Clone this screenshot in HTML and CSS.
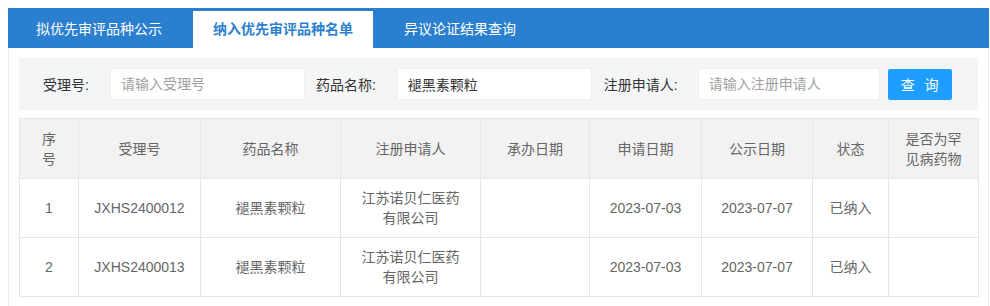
FILE: index.html
```html
<!DOCTYPE html>
<html lang="zh-CN">
<head>
<meta charset="utf-8">
<title>纳入优先审评品种名单</title>
<link rel="stylesheet" href="styles.css">
</head>
<body>
<div class="wrap">
  <div class="tabs">
    <div class="tab tab-first">拟优先审评品种公示</div>
    <div class="tab active">纳入优先审评品种名单</div>
    <div class="tab">异议论证结果查询</div>
  </div>
  <div class="content">
    <div class="search">
      <label class="lbl lbl1">受理号:</label>
      <input class="inp inp1" type="text" placeholder="请输入受理号">
      <label class="lbl lbl2">药品名称:</label>
      <input class="inp inp2" type="text" value="褪黑素颗粒">
      <label class="lbl lbl3">注册申请人:</label>
      <input class="inp inp3" type="text" placeholder="请输入注册申请人">
      <button class="btn" type="button">查 询</button>
    </div>
    <table class="grid">
      <colgroup>
        <col class="c1"><col class="c2"><col class="c3"><col class="c4"><col class="c5"><col class="c6"><col class="c7"><col class="c8"><col class="c9">
      </colgroup>
      <thead>
        <tr>
          <th>序<br>号</th>
          <th>受理号</th>
          <th>药品名称</th>
          <th>注册申请人</th>
          <th>承办日期</th>
          <th>申请日期</th>
          <th>公示日期</th>
          <th>状态</th>
          <th>是否为罕<br>见病药物</th>
        </tr>
      </thead>
      <tbody>
        <tr>
          <td>1</td>
          <td>JXHS2400012</td>
          <td>褪黑素颗粒</td>
          <td>江苏诺贝仁医药<br>有限公司</td>
          <td></td>
          <td>2023-07-03</td>
          <td>2023-07-07</td>
          <td>已纳入</td>
          <td></td>
        </tr>
        <tr>
          <td>2</td>
          <td>JXHS2400013</td>
          <td>褪黑素颗粒</td>
          <td>江苏诺贝仁医药<br>有限公司</td>
          <td></td>
          <td>2023-07-03</td>
          <td>2023-07-07</td>
          <td>已纳入</td>
          <td></td>
        </tr>
      </tbody>
    </table>
  </div>
</div>
</body>
</html>
```

FILE: styles.css
```css
* { box-sizing: border-box; }
html, body { margin: 0; padding: 0; background: #fff; }
body {
  font-family: "Liberation Sans", "Noto Sans CJK SC", sans-serif;
  font-size: 14px;
  color: #333;
}
.wrap {
  margin: 8px 0 0 8px;
  width: 981px;
}
.tabs {
  display: flex;
  align-items: flex-end;
  height: 40px;
  background: #2b7fcf;
  gap: 11px;
}
.tab {
  height: 37px;
  line-height: 37px;
  padding: 0 20px;
  color: #fff;
  white-space: nowrap;
}
.tab-first { margin-left: 8px; }
.tab.active {
  background: #fff;
  color: #2b7fcf;
  font-weight: bold;
}
.content {
  border: 1px solid #ebebeb;
  border-top: none;
  padding: 10px 10px 20px;
}
.search {
  display: flex;
  align-items: center;
  height: 52px;
  padding: 0 24px;
  background: #f3f5f6;
}
.lbl { color: #333; white-space: nowrap; }
.lbl1 { margin-right: 21px; }
.lbl2 { margin-right: 21px; }
.lbl3 { margin-right: 20px; }
.inp {
  height: 32px;
  border: 1px solid #eef0f1;
  background: #fff;
  padding: 0 10px;
  font-family: inherit;
  font-size: 14px;
  color: #333;
  outline: none;
}
.inp::placeholder { color: #a0a0a0; }
.inp1 { width: 195px; margin-right: 11px; }
.inp2 { width: 195px; margin-right: 12px; }
.inp3 { width: 182px; margin-right: 8px; }
.btn {
  width: 64px;
  height: 31px;
  border: none;
  border-radius: 2px;
  background: #1e9fff;
  color: #fff;
  font-family: inherit;
  font-size: 14px;
  letter-spacing: 3px;
  padding: 0 0 0 3px;
}
.grid {
  margin-top: 8px;
  width: 959px;
  table-layout: fixed;
  border-collapse: collapse;
  color: #666;
}
.c1 { width: 59px; }
.c2 { width: 122px; }
.c3 { width: 140px; }
.c4 { width: 140px; }
.c5 { width: 109px; }
.c6 { width: 112px; }
.c7 { width: 111px; }
.c8 { width: 76px; }
.c9 { width: 90px; }
.grid th, .grid td {
  border: 1px solid #e6e6e6;
  text-align: center;
  line-height: 20px;
  font-weight: normal;
  padding: 9px 4px;
}
.grid th {
  background: #f2f2f2;
  height: 60px;
}
.grid td { height: 59px; }
```
